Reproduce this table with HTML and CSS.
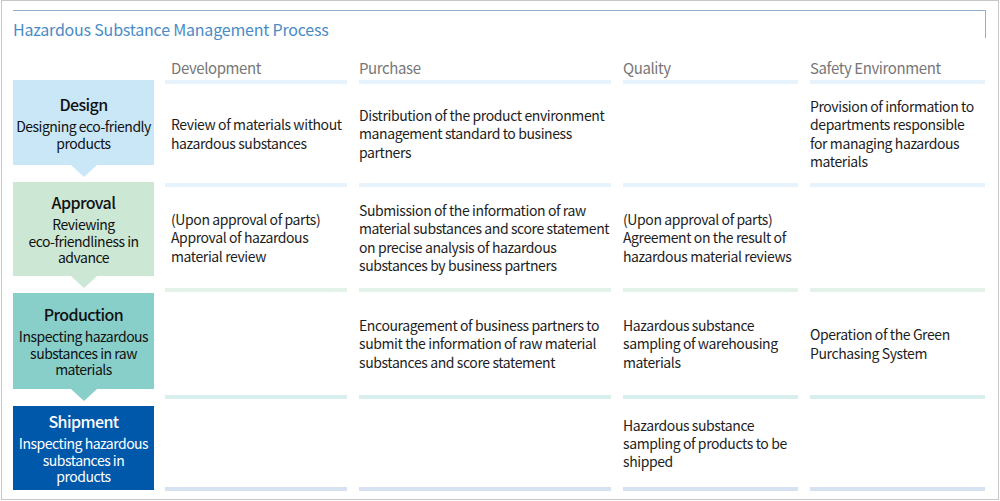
FILE: index.html
```html
<!DOCTYPE html>
<html lang="en">
<head>
<meta charset="utf-8">
<title>Hazardous Substance Management Process</title>
<link rel="stylesheet" href="styles.css">
</head>
<body>
<div class="frame">
  <div class="title-box">
    <h1 class="title">Hazardous Substance Management Process</h1>
  </div>
  <div class="main">
    <div class="stages">
      <div class="stage stage-design">
        <div class="stage-name">Design</div>
        <div class="stage-desc">Designing eco-friendly<br>products</div>
      </div>
      <div class="stage stage-approval">
        <div class="stage-name">Approval</div>
        <div class="stage-desc">Reviewing<br>eco-friendliness in<br>advance</div>
      </div>
      <div class="stage stage-production">
        <div class="stage-name">Production</div>
        <div class="stage-desc">Inspecting hazardous<br>substances in raw<br>materials</div>
      </div>
      <div class="stage stage-shipment">
        <div class="stage-name">Shipment</div>
        <div class="stage-desc">Inspecting hazardous<br>substances in<br>products</div>
      </div>
    </div>
    <div class="table">
      <div class="cell head first">Development</div>
      <div class="cell head">Purchase</div>
      <div class="cell head">Quality</div>
      <div class="cell head">Safety Environment</div>

      <div class="cell row-design first">Review of materials without<br>hazardous substances</div>
      <div class="cell row-design">Distribution of the product environment<br>management standard to business<br>partners</div>
      <div class="cell row-design"></div>
      <div class="cell row-design">Provision of information to<br>departments responsible<br>for managing hazardous<br>materials</div>

      <div class="cell row-approval first">(Upon approval of parts)<br>Approval of hazardous<br>material review</div>
      <div class="cell row-approval">Submission of the information of raw<br>material substances and score statement<br>on precise analysis of hazardous<br>substances by business partners</div>
      <div class="cell row-approval">(Upon approval of parts)<br>Agreement on the result of<br>hazardous material reviews</div>
      <div class="cell row-approval"></div>

      <div class="cell row-production first"></div>
      <div class="cell row-production">Encouragement of business partners to<br>submit the information of raw material<br>substances and score statement</div>
      <div class="cell row-production">Hazardous substance<br>sampling of warehousing<br>materials</div>
      <div class="cell row-production">Operation of the Green<br>Purchasing System</div>

      <div class="cell row-shipment first"></div>
      <div class="cell row-shipment"></div>
      <div class="cell row-shipment">Hazardous substance<br>sampling of products to be<br>shipped</div>
      <div class="cell row-shipment"></div>
    </div>
  </div>
</div>
</body>
</html>
```
FILE: styles.css
```css
* { box-sizing: border-box; }

html, body {
  margin: 0;
  padding: 0;
  background: #ffffff;
}

body {
  font-family: "Noto Sans CJK KR", "Noto Sans", sans-serif;
  color: #1e1e1e;
}

.frame {
  margin-left: 1px;
  width: 998px;
  height: 500px;
  border: 1px solid #c6c6c6;
  padding: 9px 12px 0 11px;
}

.title-box {
  height: 28px;
  border-top: 1px solid #8fb1cf;
  border-right: 1px solid #8fb1cf;
  padding-top: 7px;
}

.title {
  margin: 0;
  font-size: 16px;
  line-height: 22px;
  font-weight: 400;
  letter-spacing: -0.2px;
  color: #4a8bc6;
  white-space: nowrap;
}

.main {
  display: flex;
  gap: 11px;
}

.stages {
  width: 141px;
  flex: none;
  margin-top: 42px;
  display: flex;
  flex-direction: column;
  gap: 17px;
}

.stage {
  position: relative;
  display: flex;
  flex-direction: column;
  justify-content: center;
  align-items: center;
  text-align: center;
  color: #111111;
  white-space: nowrap;
}

.stage::after {
  content: "";
  position: absolute;
  left: 50%;
  top: 100%;
  margin-left: -13px;
  border-left: 13px solid transparent;
  border-right: 13px solid transparent;
  border-top: 12px solid transparent;
}

.stage-name {
  font-size: 16px;
  line-height: 20px;
  font-weight: 500;
  letter-spacing: -0.6px;
}

.stage-desc {
  font-size: 14px;
  line-height: 16.5px;
  letter-spacing: -0.5px;
  margin-top: 4px;
}

.stage-design { height: 85px; background: #cae7f8; }
.stage-design::after { border-top-color: #cae7f8; }

.stage-approval { height: 94px; background: #cce7d4; }
.stage-approval::after { border-top-color: #cce7d4; }

.stage-production { height: 96px; background: #88cfca; }
.stage-production::after { border-top-color: #88cfca; }

.stage-shipment { height: 84px; background: #0058aa; color: #ffffff; }
.stage-shipment::after { display: none; }

.table {
  display: grid;
  grid-template-columns: 182px 252px 175px 175px;
  grid-template-rows: 46px 103px 105px 107px 92px;
  column-gap: 12px;
}

.cell {
  display: flex;
  align-items: center;
  font-size: 14px;
  line-height: 18.3px;
  letter-spacing: -0.4px;
  color: #1e1e1e;
  white-space: nowrap;
  border-bottom: 4px solid #e6f3fd;
}

.cell.first {
  padding-left: 6px;
}

.cell.head {
  align-items: flex-end;
  padding-bottom: 1px;
  font-size: 15px;
  line-height: 22px;
  letter-spacing: -0.4px;
  color: #777777;
}

.row-design { border-bottom-color: #e6f3fd; }
.row-approval { border-bottom-color: #e4f3ea; }
.row-production { border-bottom-color: #d9efed; }
.row-shipment { border-bottom-color: #d6e1f1; }
```
